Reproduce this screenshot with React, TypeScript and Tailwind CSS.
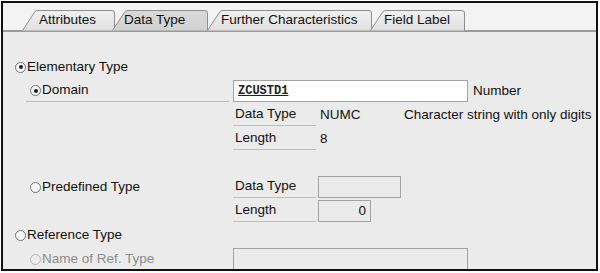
const tabs = [
  { label: "Attributes", w: 93, cls: "w-[93px] ml-[19px] pl-[17px]", active: false },
  { label: "Data Type", w: 96, cls: "w-[96px] -ml-[3px] pl-[12px]", active: true },
  { label: "Further Characteristics", w: 165, cls: "w-[165px] -ml-[1px] pl-[14px]", active: false },
  { label: "Field Label", w: 95, cls: "w-[95px] -ml-[2px] pl-[14px]", active: false },
];

function Tab({ label, w, cls, active }: { label: string; w: number; cls: string; active: boolean }) {
  const d = `M0.5 20.5 L13 1.5 Q14 0.5 16 0.5 L${w - 3} 0.5 Q${w - 0.5} 0.5 ${w - 0.5} 3 L${w - 0.5} 20.5`;
  return (
    <div className={`relative h-[20px] flex items-center pt-[1px] shrink-0 ${cls} ${active ? "z-10" : ""}`}>
      <svg className="absolute inset-0" width={w} height={21}>
        <defs>
          <linearGradient id={`g-${w}`} x1="0" y1="0" x2="0" y2="1">
            <stop offset="0" stopColor={active ? "#d9d9d9" : "#f0f0f0"} />
            <stop offset="1" stopColor={active ? "#d2d2d2" : "#e0e0e0"} />
          </linearGradient>
        </defs>
        <path d={d + " Z"} fill={`url(#g-${w})`} stroke="none" />
        <path d={d} fill="none" stroke="#8e8e8e" strokeWidth="1" />
      </svg>
      <span className="relative text-[#111]">{label}</span>
    </div>
  );
}

function Radio({ checked = false, disabled = false }: { checked?: boolean; disabled?: boolean }) {
  return (
    <span
      className={`inline-flex w-[11px] h-[11px] rounded-full border items-center justify-center shrink-0 ${
        disabled ? "border-[#b3b3b3] bg-[#ececec]" : "border-[#707070] bg-[#f7f7f7]"
      }`}
    >
      {checked && <span className="w-[4px] h-[4px] rounded-full bg-[#1e1e1e]" />}
    </span>
  );
}

function Label({ children }: { children: React.ReactNode }) {
  return <div className="w-[83px] h-[22px] flex items-center pl-[2px] border-b border-[#bdbdbd] shrink-0">{children}</div>;
}

export default function App() {
  return (
    <div className="pt-[1px] pl-[1px] font-['Liberation_Sans',Arial,sans-serif] text-[13.5px] text-[#111]">
      <div className="w-[597px] h-[270px] border-2 border-[#111] overflow-hidden bg-[#ebebeb] flex flex-col">
        {/* tab strip */}
        <div className="h-[27px] bg-[#f3f3f3] flex items-end shrink-0">
          {tabs.map((t) => (
            <Tab key={t.label} {...t} />
          ))}
        </div>
        <div className="h-[2px] bg-[#9a9a9a] shrink-0" />

        <div className="pt-[23px] flex flex-col">
          {/* Elementary Type */}
          <div className="h-6 flex items-center pl-[12px]">
            <Radio checked />
            <span className="ml-[1px]">Elementary Type</span>
          </div>

          {/* Domain */}
          <div className="h-6 flex items-center">
            <div className="ml-[23px] w-[203px] h-[21px] flex items-center pl-[4px] border-b border-[#bdbdbd]">
              <Radio checked />
              <span className="ml-[1px]">Domain</span>
            </div>
            <div className="ml-[4px] w-[235px] h-[22px] bg-white border border-[#a3a3a3] flex items-center pl-[4px]">
              <span className="font-['Liberation_Mono','Courier_New',monospace] font-bold text-[12px] text-[#222] underline">ZCUSTD1</span>
            </div>
            <span className="ml-[5px]">Number</span>
          </div>

          {/* Data Type */}
          <div className="h-6 flex items-center pl-[230px]">
            <Label>Data Type</Label>
            <div className="w-[88px] pl-[4px]">NUMC</div>
            <span>Character string with only digits</span>
          </div>

          {/* Length */}
          <div className="h-6 flex items-center pl-[230px]">
            <Label>Length</Label>
            <div className="pl-[4px]">8</div>
          </div>

          <div className="h-6" />

          {/* Predefined Type */}
          <div className="h-6 flex items-center">
            <div className="ml-[23px] w-[207px] flex items-center pl-[4px]">
              <Radio />
              <span className="ml-[1px]">Predefined Type</span>
            </div>
            <Label>Data Type</Label>
            <div className="ml-[2px] w-[83px] h-[22px] border border-[#a3a3a3]" />
          </div>

          {/* Length */}
          <div className="h-6 flex items-center pl-[230px]">
            <Label>Length</Label>
            <div className="ml-[2px] w-[53px] h-[22px] border border-[#a3a3a3] flex items-center justify-end pr-[4px]">0</div>
          </div>

          {/* Reference Type */}
          <div className="h-6 flex items-center pl-[12px]">
            <Radio />
            <span className="ml-[1px]">Reference Type</span>
          </div>

          {/* Name of Ref. Type */}
          <div className="h-6 flex items-start">
            <div className="w-[230px] h-6 flex items-center pl-[27px] text-[#8c8c8c]">
              <Radio disabled />
              <span className="ml-[1px]">Name of Ref. Type</span>
            </div>
            <div className="mt-[1px] w-[235px] h-[22px] border border-[#a3a3a3] shrink-0" />
          </div>
        </div>
      </div>
    </div>
  );
}
